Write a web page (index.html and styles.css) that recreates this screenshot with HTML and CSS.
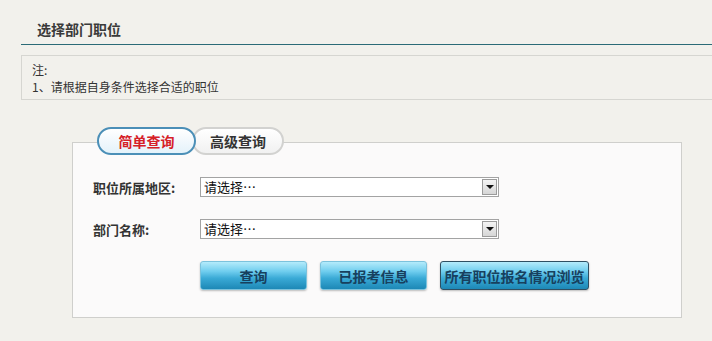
FILE: index.html
```html
<html lang="zh-CN">
<head>
  <meta charset="UTF-8">
  <meta name="viewport" content="width=device-width, initial-scale=1.0">
  <title>选择部门职位</title>
  <link rel="stylesheet" href="styles.css">
</head>
<body>
  <div class="top">
    <div class="page-title">选择部门职位</div>
    <div class="note">
      <div>注:</div>
      <div>1、请根据自身条件选择合适的职位</div>
    </div>
  </div>

  <div class="tabs">
    <span class="tab active">简单查询</span>
    <span class="tab">高级查询</span>
  </div>
  <div class="panel">
    <div class="row">
      <label class="row-label">职位所属地区:</label>
      <div class="select-box">
        <select>
          <option>请选择…</option>
        </select>
        <span class="arrow"></span>
      </div>
    </div>
    <div class="row">
      <label class="row-label">部门名称:</label>
      <div class="select-box">
        <select>
          <option>请选择…</option>
        </select>
        <span class="arrow"></span>
      </div>
    </div>
    <div class="actions">
      <button class="btn">查询</button>
      <button class="btn">已报考信息</button>
      <button class="btn wide focused">所有职位报名情况浏览</button>
    </div>
  </div>
</body>
</html>
```

FILE: styles.css
```css
* {
  box-sizing: border-box;
}

body {
  margin: 0;
  background-color: #f2f1ec;
  font-family: "Noto Sans CJK SC", "DejaVu Sans", sans-serif;
  color: #333;
  overflow: hidden;
}

.top {
  margin-left: 21px;
  margin-right: -10px;
}

.page-title {
  height: 45px;
  padding: 19px 0 0 16px;
  font-size: 14px;
  line-height: 20px;
  font-weight: bold;
  color: #3a3a3a;
  border-bottom: 1px solid #2b6b77;
}

.note {
  margin-top: 10px;
  padding: 5px 10px 4px;
  border: 1px solid #d6d6d1;
  font-size: 12px;
  line-height: 17px;
  color: #333;
}

/* Tabs */
.tabs {
  display: flex;
  margin: 27px 0 -13px 97px;
  position: relative;
  z-index: 1;
}

.tab {
  height: 28px;
  width: 92px;
  margin-left: -4px;
  border: 2px solid #d2d2d0;
  border-radius: 14px;
  background: linear-gradient(#ffffff, #f1f1f1);
  font-size: 14px;
  line-height: 24px;
  font-weight: bold;
  text-align: center;
  color: #333;
}

.tab.active {
  width: 99px;
  margin-left: 0;
  border-color: #4b8fb7;
  background: linear-gradient(#ffffff, #e4f2fa);
  color: #d62027;
  position: relative;
  z-index: 1;
}

/* Panel */
.panel {
  margin: 0 30px 0 72px;
  padding: 34px 20px 27px;
  background-color: #fbfafa;
  border: 1px solid #cfcfcc;
  display: flex;
  flex-direction: column;
  gap: 22px;
}

.row {
  display: flex;
  align-items: center;
}

.row-label {
  width: 107px;
  font-size: 13px;
  font-weight: bold;
  color: #333;
}

.select-box {
  position: relative;
  width: 299px;
  height: 20px;
}

.select-box select {
  -webkit-appearance: none;
  appearance: none;
  width: 100%;
  height: 100%;
  padding: 0 0 0 3px;
  border: 1px solid #a3a3a3;
  border-radius: 0;
  background: #fff;
  font-family: inherit;
  font-size: 13px;
  line-height: 18px;
  color: #111;
  outline: none;
}

.arrow {
  position: absolute;
  top: 2px;
  right: 2px;
  width: 15px;
  height: 16px;
  border: 1px solid #9b9b9b;
  background: linear-gradient(#f4f4f4, #d6d6d6);
  pointer-events: none;
}

.arrow::after {
  content: "";
  position: absolute;
  left: 3px;
  top: 5px;
  border-left: 4px solid transparent;
  border-right: 4px solid transparent;
  border-top: 4px solid #111;
}

/* Buttons */
.actions {
  display: flex;
  gap: 13px;
  padding-left: 107px;
}

.btn {
  width: 107px;
  height: 29px;
  padding: 0;
  border: 1px solid #7cc2dc;
  border-radius: 3px;
  background: linear-gradient(#b4ebfb 0%, #6fcdee 35%, #3aaad6 60%, #1d88b6 100%);
  box-shadow: 0 1px 2px rgba(0, 0, 0, 0.25);
  font-family: inherit;
  font-size: 14px;
  font-weight: bold;
  color: #17405e;
  cursor: pointer;
}

.btn.wide {
  width: 149px;
}

.btn.focused {
  border-color: #2f4f62;
}
```
